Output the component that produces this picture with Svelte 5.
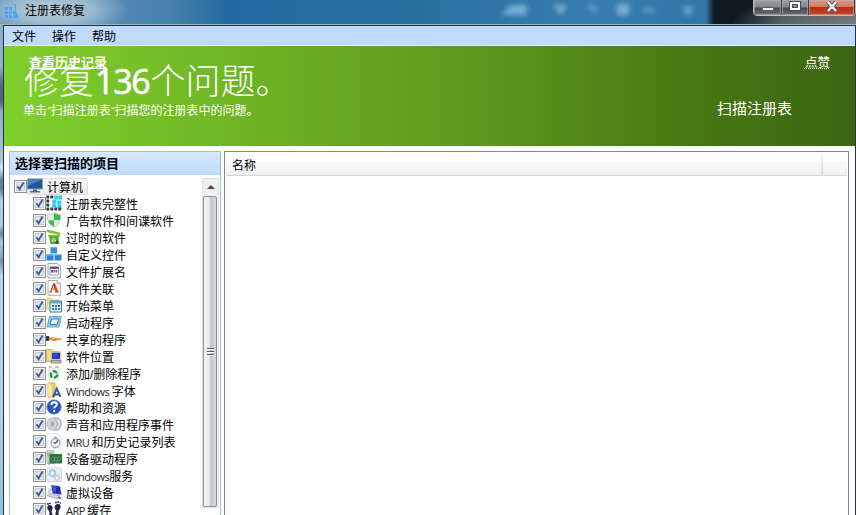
<script>
  const items = [
    ['', '注册表完整性', 'grid'], ['', '广告软件和间谍软件', 'shield'],
    ['', '过时的软件', 'bin'], ['', '自定义控件', 'cubes'],
    ['', '文件扩展名', 'ext'], ['', '文件关联', 'assoc'],
    ['', '开始菜单', 'start'], ['', '启动程序', 'run'],
    ['', '共享的程序', 'share'], ['', '软件位置', 'place'],
    ['', '添加/删除程序', 'recycle'], ['Windows ', '字体', 'font'],
    ['', '帮助和资源', 'help'], ['', '声音和应用程序事件', 'sound'],
    ['MRU ', '和历史记录列表', 'clock'], ['', '设备驱动程序', 'driver'],
    ['Windows', '服务', 'gears'], ['', '虚拟设备', 'virtual'],
    ['ARP ', '缓存', 'feet']
  ];
  const dots = [[0,0,0],[4,0,0],[8,0,1],[12,0,1],[0,4,0],[6,4,1],[11,5,1],[0,8,0],[6,8,1],[11,9,1],[0,12,0],[4,12,0],[8,12,0],[12,12,0]];
</script>

{#snippet check()}
  <svg class="check" width="13" height="13" viewBox="0 0 13 13">
    <rect x=".5" y=".5" width="12" height="12" fill="#f4f4f4" stroke="#8e8f8f" />
    <rect x="2.5" y="2.5" width="8" height="8" fill="#e3e6e9" stroke="#c9cdd1" />
    <path d="M3.5 6.3 5.6 9.3 9.6 2.6" fill="none" stroke="#405a9e" stroke-width="1.9" />
  </svg>
{/snippet}

{#snippet icon(kind)}
  <svg class="icon" width="16" height="16" viewBox="0 0 16 16">
    {#if kind === 'grid'}
      {#each dots as [x, y, blue]}
        <rect x={x + .3} y={y + .5} width={blue ? 4 : 3} height={blue ? 4 : 3} rx=".5" fill={blue ? '#27cdfb' : '#393e43'} />
      {/each}
    {:else if kind === 'shield'}
      <path d="M8 .5 15 3q0 9-7 12.5Q1 12 1 3z" fill="#ddd" stroke="#c6cbc5" />
      <path d="M8 1.2 14.3 3.4q.1 2.6-.5 4.8H8zM2.3 8.2H8v6.6Q3.6 12.4 2.3 8.2" fill="#2fbf3e" />
      <path d="M8 8.2h5.8Q12.4 12.5 8 14.8zM1.7 3.4 8 1.2v7H2.3q-.6-2.2-.6-4.8" fill="#e6e8e6" />
    {:else if kind === 'bin'}
      <path d="m1.5 1 12.5 3-.4 1.6L1.2 2.8z" fill="#80c33b" stroke="#5ea525" stroke-width=".6" />
      <path d="M3 6.5h10L12 15H4.5z" fill="#58a627" /><path d="M2 5.8h12v1.8H2z" fill="#79c43d" />
      <path d="m5.8 12 2-3 2 3z" fill="none" stroke="#d2efb7" /><circle cx="11.3" cy="13.2" r="1.8" fill="#385e28" />
    {:else if kind === 'cubes'}
      <path d="M4.5 1h6.5v6.5H4.5z" fill="#3a91db" /><path d="M.5 8.5h7v6h-7zM8.5 8.5h7v6h-7z" fill="#2684d2" />
      <path d="M4.5 1.5H11M.5 9h7M8.5 9h7" stroke="#64b6f0" stroke-width="1.2" />
    {:else if kind === 'ext'}
      <path d="M2 .5h9l3.5 3V15H2z" fill="#f7f7fa" stroke="#a6a6ad" /><path d="M4 4h8.5v8H4z" fill="#fff" stroke="#a298c2" />
      <path d="M4 3.8h8.5v2H4z" fill="#514388" /><path d="M5 7h2v2.5H5z" fill="#6c4aae" /><path d="M7.3 7h2v2.5h-2z" fill="#e44868" /><path d="M9.6 7h1.8v2.5H9.6z" fill="#38994d" />
    {:else if kind === 'assoc'}
      <path d="M2 .5h9l3.5 3V15.3H2z" fill="#fcfcfc" stroke="#abadb0" /><path d="M11 .5v3h3" fill="#dae7f6" stroke="#abadb0" />
      <path d="m4.5 12 3.2-8.5" fill="none" stroke="#d64026" stroke-width="1.1" /><path d="m7.8 3.5 3.3 8.5" stroke="#d64026" stroke-width="2.3" /><path d="M6 9h4M3.3 12h3M9 12h4" fill="none" stroke="#d64026" stroke-width="1.2" />
    {:else if kind === 'start'}
      <path d="M.8 1h5l1 2h6v9h-12z" fill="#f2df8d" stroke="#d6c674" stroke-width=".7" />
      <path d="M4 4h11.5v11H4z" fill="#e3f5fb" stroke="#387da8" /><path d="M4 4h11.5v2.5H4z" fill="#5ca9cb" />
      <path d="M6 8h2v2H6zm3 0h2v2H9zm3 0h2v2h-2zm-6 3h2v2H6zm3 0h2v2H9zm3 0h2v2h-2z" fill="#257fb5" />
    {:else if kind === 'run'}
      <path d="M3.5 2.5h11.8L13 13H1z" fill="#8fc5e4" stroke="#79a5c4" /><path d="M5.5 5h7.3L11 10.5H4z" fill="#e5f6ff" stroke="#3882b8" />
    {:else if kind === 'share'}
      <path d="M0 5v5l3-.3V5z" fill="#333d48" /><path d="M3 6q3.5-.7 5.5.8l7 .4v1.6l-4 .4q-2 1.4-5 .6L3 9.2z" fill="#e28d48" /><path d="M11 7.3h5v1.9h-4z" fill="#f5ad79" /><path d="m4 6.5 4 1.2" stroke="#f4cfa6" />
    {:else if kind === 'place'}
      <path d="M.5 1.5h5l1.3 2H13v10H.5z" fill="#f2dc73" stroke="#cbb34f" /><rect x="5.5" y="4.2" width="9" height="7.2" fill="#202da9" stroke="#c0c2c9" stroke-width="1.2" /><path d="M7 5.5h4.5V9H7z" fill="#2454d8" /><path d="M5 12.5h10V15H5z" fill="#b8bbc1" stroke="#686e78" stroke-width=".7" />
    {:else if kind === 'recycle'}
      <path d="M2 3h12l-1.5 12.5h-9z" fill="#f0f0ed" stroke="#ddd" stroke-width=".6" /><path d="M3 2h3m3 0h4" stroke="#dfa699" stroke-width="1.3" />
      <circle cx="8" cy="9.5" r="3.2" fill="none" stroke="#2b924c" stroke-width="2.2" stroke-dasharray="5 1.7" /><path d="m6.2 5 3.5.2-1.6 2zM3.5 9.5l3 .8-1.8 2.2zM12.5 9.5l-.8 3-2-1.8z" fill="#2b924c" />
    {:else if kind === 'font'}
      <path d="M2 1h7v14H2z" fill="#eac963" stroke="#d8b34c" /><path d="m2 1 4 2v12.5L2 13.5z" fill="#f9e4a0" /><path d="m7 15 3.7-8.5L14.5 15M8.5 12.5h5" fill="none" stroke="#315ba9" stroke-width="1.9" />
    {:else if kind === 'help'}
      <circle cx="8" cy="8" r="7" fill="#2755b7" stroke="#3d6fc8" /><path d="M2.5 6a6 6 0 0 1 11-.5Q8 3.5 2.5 6" fill="#648bd9" opacity=".7" />
      <path d="M5.5 6q0-2.7 2.7-2.7 2.6 0 2.6 2.2 0 1.2-1.4 2Q8.2 8.2 8.2 9.4M8.2 11v2" fill="none" stroke="#fff" stroke-width="1.9" />
    {:else if kind === 'sound'}
      <ellipse cx="10" cy="8" rx="5.5" ry="6.7" fill="#c2c5c9" stroke="#b5bac0" /><ellipse cx="6" cy="8" rx="5" ry="6" fill="#d3d6d9" stroke="#b4b8bb" /><ellipse cx="6.3" cy="8" rx="2" ry="2.7" fill="#a5aab0" /><path d="m11 4 2 1v5l-2 2" fill="none" stroke="#eef0f1" />
    {:else if kind === 'clock'}
      <path d="M1 .5h10l4 4V15H1z" fill="#fafafa" stroke="#e1e3e5" /><circle cx="9.5" cy="10" r="4.5" fill="#e8eff2" stroke="#a2b2bb" stroke-width="1.3" /><path d="m12 7-2.5 3.3L7.5 9.5" fill="none" stroke="#395a76" stroke-width="1.3" /><path d="M8.3 4.5h2.4" stroke="#8c9ba4" stroke-width="1.6" />
    {:else if kind === 'driver'}
      <path d="M1 .5h7v13H1z" fill="#d4e5d7" stroke="#a3c2ad" /><path d="M1 3h6M1 5h6" stroke="#7ba28a" /><path d="M4 4.5h12v8.5H4z" fill="#17713a" stroke="#327c4c" /><path d="M6 7h2v4H6zm3 0h2v4H9zm3 0h2v4h-2z" fill="#163f29" stroke="#9dc38a" stroke-width=".6" /><path d="M3.2 3.5V15" stroke="#7c8a82" />
    {:else if kind === 'gears'}
      <path d="M1 1h14.5v13.5H1z" fill="#e8eef1" stroke="#d3dade" /><circle cx="6.3" cy="6.2" r="3" fill="#eff8fc" stroke="#92c6dc" stroke-width="1.8" stroke-dasharray="2 .5" /><circle cx="11.2" cy="10.8" r="2.2" fill="#fff" stroke="#a2cbdc" stroke-width="1.6" stroke-dasharray="1.5 .5" />
    {:else if kind === 'virtual'}
      <path d="m5 1 9 1.2 1.5 8.5-9-1.2z" fill="#1724b5" stroke="#b0b9cd" stroke-width=".7" /><path d="m6 2 4.5.6-.5 5.7-3-.5z" fill="#3857dd" /><path d="m1 11.5 4-2 9 2.5-3 2.8z" fill="#d5d8df" stroke="#a9adb7" /><path d="M2.5 4 5 5v5l-3 1z" fill="#d0d3dc" /><path d="m12.5 12.5 3 1-1 1.5-3-.8z" fill="#687281" />
    {:else if kind === 'feet'}
      <g fill="#26254d"><path d="M1.3 6Q2 3.2 5 4.3 7.7 5.7 6 9q-1 2 .8 5-1.6 3-3.6.3.8-4-1-5.2Q.8 7.5 1.3 6" /><path d="M9 4.7q3-3.5 5.3-.4 1.3 2-1.5 5.2-.7 2.2 0 4.3-1.6 2.5-3.2.2-.6-2 .7-4.6Q7.7 7.2 9 4.7" /><circle cx="2" cy="3" r="1" /><circle cx="4" cy="2.4" r=".9" /><circle cx="10" cy="1.5" r=".9" /><circle cx="12.2" cy="1" r=".9" /><circle cx="14.3" cy="2" r=".8" /></g>
    {:else}
      <path d="M.5 1h15v10H.5z" fill="#20579c" stroke="#879fb6" /><path d="M1 1.5h14L1 8z" fill="#4783b9" /><path d="M6 11.5h4V13h3v1.5H3V13h3z" fill="#606a73" />
    {/if}
  </svg>
{/snippet}

<main>
  <header class="titlebar">
    <svg class="appicon" width="14" height="15" viewBox="0 0 14 15"><path d="M0 4h3v3H0zm4 0h3v3H4zM0 8h3v3H0zm4 0h3v3H4zm4 0h2v3H8zM0 12h3v3H0zm4 0h3v3H4zM10 1h1v7l3 7H8l2-7z" fill="#4ba4f4" /></svg>
    <span>注册表修复</span>
    <div class="ghost">
      <svg width="230" height="24"><g fill="#95c6e9"><path d="m3 13 8-8h16v10H3zM54 5h13l-5 9h-3zM117 4h12v11h-12z" /><path d="m88 5 7 4-1 3M143 10h11M184 6l8 8m0-8-8 8" fill="none" stroke="#95c6e9" stroke-width="3" /></g></svg>
    </div>
    <div class="controls">
      <span class="min"><svg width="12" height="5"><path d="M.5.5h11v3H.5z" fill="#fff" stroke="#555b69" /></svg></span>
      <span class="max"><svg width="12" height="10"><path d="M2 2h8v6H2z" fill="none" stroke="#454b60" stroke-width="4" /><path d="M2 2h8v6H2z" fill="none" stroke="#fff" stroke-width="2" /></svg></span>
      <span class="close"><svg width="12" height="11"><path d="m2 1 8 9m0-9-8 9" stroke="#494a5c" stroke-width="4.4" /><path d="m2 1 8 9m0-9-8 9" stroke="#fff" stroke-width="2.5" /></svg></span>
    </div>
  </header>
  <div class="window">
    <nav><span>文件</span><span>操作</span><span>帮助</span></nav>
    <section class="hero">
      <div class="summary">
        <h1>修复<b>136</b>个问题。</h1>
        <p>单击<i>”</i>扫描注册表<i>“</i>扫描您的注册表中的问题。</p>
        <span class="history">查看历史记录</span>
      </div>
      <div class="actions"><span class="like">点赞</span><span class="scan">扫描注册表</span></div>
    </section>
    <section class="content">
      <aside>
        <h2>选择要扫描的项目</h2>
        <div class="body">
          <div class="tree">
            <div class="root">{@render check()}<div class="rootlabel">{@render icon('computer')}<span>计算机</span></div></div>
            {#each items as [latin, text, kind]}
              <div class="row">{@render check()}{@render icon(kind)}<span class="label"><span class="latin">{latin}</span>{text}</span></div>
            {/each}
          </div>
          <div class="scroll">
            <div class="up"><svg width="8" height="5"><path d="m0 4 4-4 4 4z" fill="#4a4c50" /></svg></div>
            <div class="thumb"><i></i><i></i><i></i></div>
          </div>
        </div>
      </aside>
      <div class="list"><div class="columns"><span>名称</span><i></i></div></div>
    </section>
  </div>
</main>

<style>
  :global(body) { margin: 0; }
  * { box-sizing: border-box; }
  main { width: 856px; height: 515px; overflow: hidden; display: flex; flex-direction: column; font: 12px/16px "Liberation Sans", "Noto Sans CJK SC", sans-serif; color: #000; background: linear-gradient(#86acc9 0, #8fb4cf 65px, #4d6a80 85px, #4d6a80 102px, #90b0c4 112px, #a5c4da 160px, #dce5e8 168px, #64849c 180px, #64849c 190px, #b5d2ea 200px, #a9c9e3 225px, #6788a1 234px, #a9c9e3 242px, #7998b0 262px, #b6d5ee 275px, #b0d2ee 400px, #8fbfe4 515px); white-space: nowrap; }
  svg { display: block; flex-shrink: 0; }
  .titlebar { position: relative; height: 25px; flex: none; display: flex; padding: 3px 0 0 5px; background: radial-gradient(ellipse 75px 26px at 54px 10px, #c6d3dbdd 0, #b4cad8bb 50%, transparent), radial-gradient(ellipse 125px 38px at 856px 26px, #777b7e 0, #5b6062 60%, transparent), linear-gradient(90deg, #6798bd 0, #4682ae 170px, #236b9f 225px, #28719f 420px, #397db0 600px, #3276a8 706px, #101a22 714px, #11171a 856px); border-bottom: 1px solid #9bb4c5; }
  .appicon { margin-right: 6px; }
  .ghost { position: absolute; left: 500px; top: 0; filter: blur(2.6px); opacity: .7; }
  .controls { position: absolute; left: 753px; top: -1px; width: 103px; height: 17px; display: flex; border: 1px solid #b7bdc0; border-radius: 0 0 4px 4px; overflow: hidden; }
  .controls span { display: flex; justify-content: center; border-right: 1px solid #383c41; box-shadow: inset 0 0 0 1px #b0b3b599; background: linear-gradient(#9b9da0, #85888b 48%, #45484b 52%, #6d7073); }
  .min { width: 28px; padding-top: 7px; }
  .max { width: 27px; padding-top: 1px; }
  .controls .close { flex: 1; padding-top: 1px; background: linear-gradient(#d99b8b, #cf7862 45%, #b92c14 50%, #cc4621); }
  .window { flex: 1; min-height: 0; margin-left: 3px; border: 1px solid #24323e; border-bottom: 0; background: white; display: flex; flex-direction: column; }
  nav { height: 20px; flex: none; display: flex; gap: 16px; padding: 3px 8px 0; line-height: 16px; background: #bfdbff; border-bottom: 1px solid #e3eeee; }
  .hero { height: 100px; flex: none; display: flex; justify-content: space-between; background: linear-gradient(90deg, #80d02c, #5d981d 56%, #457713 82%, #3e6512); color: white; }
  .summary { position: relative; padding: 12px 0 0 20px; }
  h1 { margin: 0; font-size: 35px; line-height: 42px; height: 42px; font-weight: 300; font-family: "Noto Sans CJK SC", sans-serif; }
  h1 b { margin: 0 1px 0 1px; font: 400 34px/42px "Noto Sans", "Open Sans", sans-serif; letter-spacing: -1.3px; -webkit-text-stroke: .5px white; }
  p { margin: 3px 0 0 -1px; }
  p i { font-size: 11px; }
  .history { position: absolute; left: 25px; top: 9px; font-size: 13px; font-weight: bold; text-decoration: underline; }
  .actions { display: flex; flex-direction: column; align-items: flex-end; width: 150px; padding: 9px 25px 0 0; }
  .like { font-size: 12.5px; text-decoration: underline dotted; text-underline-offset: 1px; }
  .scan { margin: 28px 38px 0 0; font-size: 15px; line-height: 20px; }
  .content { flex: 1; min-height: 0; padding: 5px 6px 0 5px; display: flex; gap: 3px; }
  aside { width: 212px; border: 1px solid #9ebce8; border-bottom: 0; display: flex; flex-direction: column; }
  h2 { margin: 0; height: 23px; flex: none; padding: 3px 5px; font-size: 13px; line-height: 17px; font-weight: bold; background: linear-gradient(#d8e8ff, #bed9ff); }
  .body { flex: 1; min-height: 0; display: flex; justify-content: space-between; }
  .tree { padding: 3px 0 0 4px; }
  .root { height: 17px; display: flex; align-items: center; }
  .rootlabel { height: 17px; display: flex; align-items: center; width: 61px; gap: 3px; border: 1px solid #dedede; border-left: 0; border-radius: 2px; background: linear-gradient(#fafafa, #e8e8e8); }
  .rootlabel span { padding-top: 2px; margin-left: 1px; }
  .row { height: 17px; padding-left: 19px; display: flex; align-items: center; }
  .check, .icon { margin-top: -1px; }
  .label { margin-left: 4px; padding-top: 2px; height: 17px; line-height: 16px; }
  .latin { white-space: pre; font: 11px/14px "Open Sans", "Noto Sans", sans-serif; letter-spacing: -.5px; color: #222; }
  .scroll { width: 17px; margin: 3px 1px 0 0; height: 330px; background: #eee; border: 1px solid #e2e2e2; display: flex; flex-direction: column; }
  .up { height: 17px; flex: none; display: flex; align-items: center; justify-content: center; background: #f0f0f0; }
  .thumb { flex: 1; margin-right: 1px; border: 1px solid #8c9298; border-radius: 2px; background: linear-gradient(90deg, #f4f5f6, #e3e7eb 45%, #bdc5ce 55%, #d5dade); display: flex; flex-direction: column; align-items: center; justify-content: center; gap: 1px; }
  .thumb i { width: 7px; height: 2px; background: #555b60; border-bottom: 1px solid #fff; }
  .list { flex: 1; border: 1px solid #828790; border-bottom: 0; padding: 1px 1px 0; }
  .columns { height: 23px; padding: 5px 24px 0 6px; display: flex; justify-content: space-between; background: linear-gradient(#fff 0 41%, #f5f7f9 43%, #eff1f3); border-bottom: 1px solid #d5d5d5; }
  .columns i { width: 2px; margin-top: -5px; height: 22px; background: linear-gradient(#f2f2f2, #d7d9dc); }
</style>
